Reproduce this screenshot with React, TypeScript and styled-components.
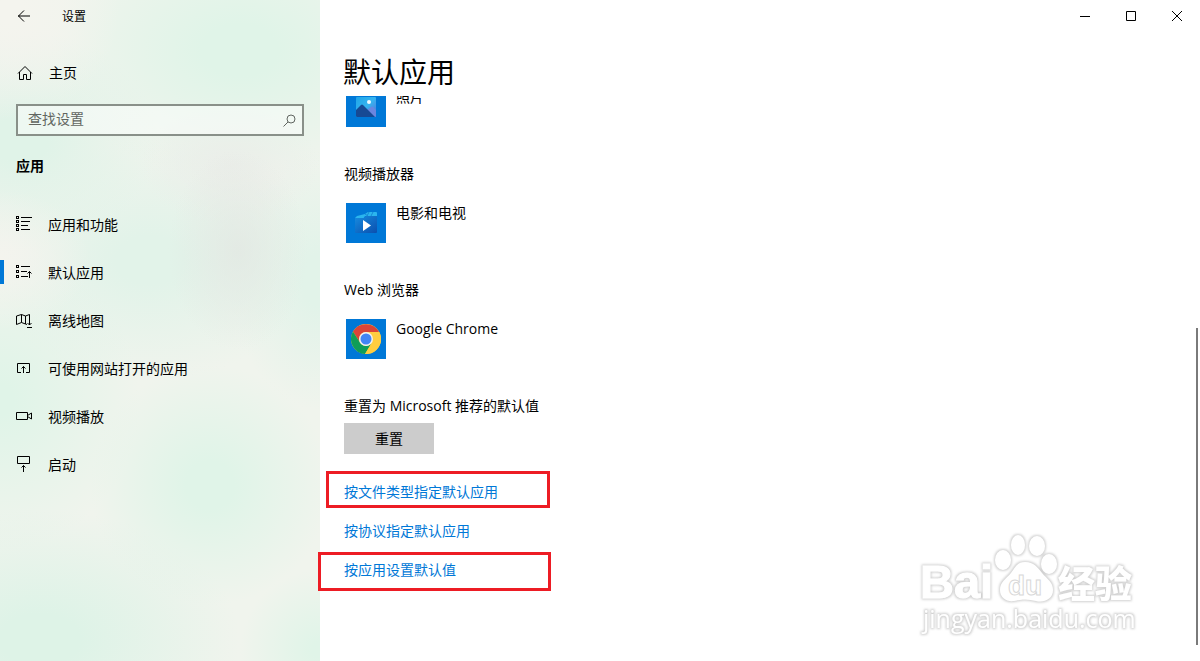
import React from "react";
import styled, { createGlobalStyle } from "styled-components";

const GlobalStyle = createGlobalStyle`
  *, *::before, *::after { box-sizing: border-box; }
  body {
    margin: 0;
    background: #fff;
    color: #000;
    font-family: "Open Sans", "Noto Sans CJK SC", sans-serif;
    font-size: 14px;
    line-height: 20px;
  }
  button, input { font: inherit; color: inherit; }
`;

const Page = styled.div`
  display: flex;
  min-height: 100vh;
  overflow: hidden;
`;

/* Sidebar */

const Sidebar = styled.aside`
  flex: 0 0 320px;
  background:
    radial-gradient(ellipse 70px 100px at 238px 250px, rgba(225, 230, 225, 0.7) 0%, rgba(225, 230, 225, 0) 100%),
    radial-gradient(ellipse 90px 60px at 230px 165px, rgba(234, 236, 232, 0.8) 0%, rgba(234, 236, 232, 0) 100%),
    radial-gradient(ellipse 110px 110px at 10px 10px, rgba(244, 244, 238, 1) 10%, rgba(244, 244, 238, 0) 100%),
    radial-gradient(ellipse 90px 70px at 0 260px, rgba(244, 244, 238, 1) 0%, rgba(244, 244, 238, 0) 100%),
    radial-gradient(ellipse 190px 130px at 240px 50px, rgba(224, 244, 232, 1) 20%, rgba(224, 244, 232, 0) 100%),
    radial-gradient(ellipse 140px 110px at 20px 140px, rgba(224, 243, 232, 1) 20%, rgba(224, 243, 232, 0) 100%),
    radial-gradient(ellipse 120px 120px at 210px 485px, rgba(224, 244, 232, 1) 20%, rgba(224, 244, 232, 0) 100%),
    radial-gradient(ellipse 200px 130px at 40px 640px, rgba(222, 243, 231, 1) 20%, rgba(222, 243, 231, 0) 100%),
    radial-gradient(ellipse 140px 150px at 0 400px, rgba(224, 244, 232, 1) 10%, rgba(224, 244, 232, 0) 100%),
    radial-gradient(ellipse 170px 120px at 150px 260px, rgba(226, 243, 233, 1) 20%, rgba(226, 243, 233, 0) 100%),
    radial-gradient(ellipse 90px 130px at 320px 280px, rgba(226, 243, 233, 1) 20%, rgba(226, 243, 233, 0) 100%),
    radial-gradient(ellipse 80px 80px at 320px 650px, rgba(224, 244, 232, 1) 10%, rgba(224, 244, 232, 0) 100%),
    #f0f4ed;
`;

const TitleRow = styled.div`
  display: flex;
  align-items: center;
  height: 32px;
  font-size: 12px;
`;

const BackButton = styled.button`
  display: grid;
  place-items: center;
  width: 48px;
  height: 32px;
  padding: 0;
  border: 0;
  background: transparent;
`;

const WindowTitle = styled.span`
  margin-left: 14px;
  padding-top: 2px;
`;

const HomeLink = styled.a`
  display: flex;
  align-items: center;
  gap: 16px;
  height: 48px;
  margin-top: 17px;
  padding-left: 17px;
  color: inherit;
  text-decoration: none;
`;

const SearchBox = styled.label`
  display: flex;
  align-items: center;
  height: 32px;
  margin: 7px 16px 0;
  padding: 0 6px 0 10px;
  border: 2px solid #899089;
  background: rgba(255, 255, 255, 0.45);
`;

const SearchInput = styled.input`
  flex: 1;
  min-width: 0;
  height: 28px;
  padding: 0 0 4px;
  border: 0;
  outline: 0;
  background: transparent;
  &::placeholder { color: #616661; opacity: 1; }
`;

const SidebarHeading = styled.h2`
  margin: 20px 16px 24px;
  font-size: 14px;
  line-height: 20px;
  font-weight: 700;
`;

const NavItem = styled.a<{ $active?: boolean }>`
  display: flex;
  align-items: center;
  gap: 14px;
  height: 48px;
  padding-left: 12px;
  color: inherit;
  text-decoration: none;
  &::before {
    content: "";
    width: 4px;
    height: 24px;
    margin: 0 -2px 0 -12px;
    background: ${(p) => (p.$active ? "#0078d7" : "transparent")};
  }
`;

const NavLabel = styled.span`
  padding-top: 2px;
`;

const Icon = styled.svg`
  display: block;
  flex: none;
  fill: none;
  stroke: currentColor;
  stroke-width: 1;
`;

/* Main pane */

const Main = styled.main`
  position: relative;
  flex: 1;
  min-width: 0;
`;

const Header = styled.header`
  padding-bottom: 4px;
`;

const CaptionButtons = styled.div`
  display: flex;
  justify-content: flex-end;
`;

const CaptionButton = styled.button`
  display: grid;
  place-items: center;
  width: 46px;
  height: 32px;
  padding: 0;
  border: 0;
  background: transparent;
`;

const PageTitle = styled.h1`
  margin: 20px 23px 0;
  font-size: 28px;
  line-height: 40px;
  font-weight: 400;
`;

/* Clips the scrolled list at its top edge; highlights may reach over the sides. */
const ScrollArea = styled.div`
  display: flow-root;
  overflow-x: visible;
  overflow-y: clip;
`;

const Content = styled.div`
  margin-top: -9px;
  padding: 0 24px 24px;
`;

const Group = styled.section`
  margin-bottom: 37px;
`;

const GroupTitle = styled.h3`
  margin: 0 0 19px;
  font-size: 14px;
  line-height: 20px;
  font-weight: 400;
`;

const AppButton = styled.button`
  display: flex;
  gap: 10px;
  padding: 0 2px;
  border: 0;
  background: transparent;
  text-align: left;
`;

const Tile = styled.span`
  display: grid;
  place-items: center;
  width: 40px;
  height: 40px;
  background: #0078d7;
`;

const ResetTitle = styled(GroupTitle)`
  margin-bottom: 7px;
`;

const ResetButton = styled.button`
  display: block;
  width: 90px;
  height: 31px;
  padding: 0;
  border: 0;
  background: #ccc;
`;

const Links = styled.ul`
  display: grid;
  gap: 19px;
  margin: 28px 0 0;
  padding: 0;
  list-style: none;
`;

const LinkRow = styled.li`
  position: relative;
  height: 20px;
`;

const TextLink = styled.a`
  color: #0078d7;
  text-decoration: none;
`;

const Highlight = styled.span<{ $left: number; $top: number; $width: number; $height: number }>`
  position: absolute;
  left: ${(p) => p.$left}px;
  top: ${(p) => p.$top}px;
  width: ${(p) => p.$width}px;
  height: ${(p) => p.$height}px;
  border: 3px solid #ed1c24;
  pointer-events: none;
`;

const ScrollThumb = styled.div`
  position: absolute;
  right: 2px;
  bottom: 16px;
  width: 2px;
  height: 48%;
  background: #7a7a7a;
`;

const Watermark = styled.svg`
  position: absolute;
  right: 58px;
  bottom: 21px;
  pointer-events: none;
`;

/* Icons */

const AppsIcon = () => (
  <Icon width="18" height="16" shapeRendering="crispEdges">
    {[0, 4, 8, 12].map((y) => <rect key={y} x="0.5" y={y + 0.5} width="2" height="2" />)}
    <path d="M5 1.5h11M5 5.5h9M5 9.5h7M5 13.5h9" />
  </Icon>
);

const DefaultsIcon = () => (
  <Icon width="18" height="16">
    {[1, 6, 11].map((y) => <rect key={y} x="0.5" y={y + 0.5} width="2" height="2" />)}
    <path d="M5 2.5h9M5 7.5h6M5 12.5h7M13.5 14V7.5M11.5 9.5l2-2l2 2" />
  </Icon>
);

const MapIcon = () => (
  <Icon width="18" height="16">
    <path d="M11 12.5l-1.500-.5l-4-1.500l-5 2V4l5-1.500l4 1.500l4-1.500V13M5.500 2.500v8M9.500 4v8M11.500 11l2 2l2-2M11 15.500h5" />
  </Icon>
);

const WebAppsIcon = () => (
  <Icon width="18" height="16">
    <path d="M5 12.500H1.500v-9h12v9H10M7.500 13V6.500M5.500 8.500l2-2l2 2" />
  </Icon>
);

const VideoIcon = () => (
  <Icon width="18" height="16">
    <path d="M.5 4.500h11v7H.5zM11.500 7.500l4-2.500v6l-4-2.500" />
  </Icon>
);

const StartupIcon = () => (
  <Icon width="18" height="16">
    <path d="M1.500 .5h12v7h-12zM7.500 16V9.500M5.500 11.500l2-2l2 2" />
  </Icon>
);

const PhotosLogo = () => (
  <svg width="20" height="20" viewBox="0 0 20 20">
    <defs>
      <linearGradient id="sky" x1="0" y1="0" x2="1" y2="1">
        <stop offset="0" stopColor="#1fa5e8" />
        <stop offset="0.5" stopColor="#35b4f0" />
        <stop offset="1" stopColor="#5c6bd6" />
      </linearGradient>
    </defs>
    <rect width="20" height="20" rx="1" fill="url(#sky)" />
    <path d="M10 14l5-4q1-1 2 0l3 3v6q0 1-1 1h-5z" fill="#6a86e0" />
    <path d="M0 13l5-5q1-1 2 0l12 12H1q-1 0-1-1z" fill="#174a94" />
    <circle cx="13" cy="5" r="2" fill="#effaff" />
  </svg>
);

const MoviesLogo = () => (
  <svg width="24" height="22" viewBox="0 0 24 22">
    <defs>
      <linearGradient id="film" x1="0" y1="0" x2="1" y2="1">
        <stop offset="0" stopColor="#168be0" />
        <stop offset="1" stopColor="#0b4fae" />
      </linearGradient>
    </defs>
    <path d="M1 6l2-2l8-2l3-2h8q1 0 1 1v3H11l-2 3H1z" fill="#2bb5ee" />
    <path d="M11 2l3 2M15 0l-2 4M19 0l-2 4" stroke="#1689d5" />
    <path d="M1 6h9l2-2h11v16q0 1-1 1H2q-1 0-1-1z" fill="url(#film)" />
    <path d="M9 8l8 5.500l-8 5.500z" fill="#fff" />
  </svg>
);

const ChromeLogo = () => (
  <svg width="30" height="30" viewBox="0 0 30 30">
    <circle cx="15" cy="15" r="15" fill="#ffcd40" />
    <path d="M2 7.500A15 15 0 0 1 28 8H15a7 7 0 0 0-6 10.500z" fill="#db4437" />
    <path d="M2 7.500A15 15 0 0 0 14 30l7-11.500a7 7 0 0 1-12 0z" fill="#0f9d58" />
    <path d="M15 8h13.300A15 15 0 0 1 14 30l7-11.500a7 7 0 0 0-6-10.500z" fill="#ffcd40" />
    <circle cx="15" cy="15" r="7" fill="#f1f1f1" />
    <circle cx="15" cy="15" r="5.500" fill="#4285f4" />
  </svg>
);

const BaiduWatermark = () => (
  <Watermark width="224" height="112" viewBox="0 0 224 112" aria-label="Baidu 经验">
    <defs>
      <filter id="glow" x="-5%" y="-5%" width="110%" height="110%">
        <feMorphology in="SourceAlpha" operator="dilate" radius="1" result="fat" />
        <feGaussianBlur in="fat" stdDeviation="0.8" result="soft" />
        <feFlood floodColor="#c4c4c4" floodOpacity="0.8" />
        <feComposite in2="soft" operator="in" result="halo" />
        <feMerge>
          <feMergeNode in="halo" />
          <feMergeNode in="SourceGraphic" />
        </feMerge>
      </filter>
    </defs>
    <g fill="#fff" filter="url(#glow)">
      <text x="2" y="70" fontFamily="Liberation Sans" fontWeight="700" fontSize="47" stroke="#fff">Bai</text>
      <ellipse cx="85" cy="32" rx="8" ry="10" />
      <ellipse cx="100" cy="17" rx="7" ry="10" />
      <ellipse cx="119" cy="18" rx="8" ry="10" />
      <ellipse cx="131" cy="36" rx="8" ry="10" />
      <path d="M107 34c-8 0-10 6-14 11c-5 6-11 9-11 17c0 8 7 12 14 11c8-2 15-2 22 0c8 2 17-2 17-11c0-8-6-11-11-17c-5-6-8-11-17-11z" />
      <text x="140" y="70" fontFamily="Noto Sans CJK SC" fontWeight="900" fontSize="37">经验</text>
      <text x="5" y="100" fontFamily="Open Sans" fontSize="25">jingyan.baidu.com</text>
    </g>
    <text x="90" y="67" fontFamily="Liberation Sans" fontWeight="700" fontSize="28" fill="#fff" stroke="#d8d8d8">du</text>
  </Watermark>
);

const navItems = [
  { label: "应用和功能", icon: <AppsIcon /> },
  { label: "默认应用", icon: <DefaultsIcon />, active: true },
  { label: "离线地图", icon: <MapIcon /> },
  { label: "可使用网站打开的应用", icon: <WebAppsIcon /> },
  { label: "视频播放", icon: <VideoIcon /> },
  { label: "启动", icon: <StartupIcon /> },
];

const groups = [
  { title: "", app: "照片", logo: <PhotosLogo /> },
  { title: "视频播放器", app: "电影和电视", logo: <MoviesLogo /> },
  { title: "Web 浏览器", app: "Google Chrome", logo: <ChromeLogo /> },
];

export default function App() {
  return (
    <>
      <GlobalStyle />
      <Page>
        <Sidebar>
          <TitleRow>
            <BackButton aria-label="返回">
              <Icon width="12" height="12"><path d="M0 6h12M6 .5L.5 6L6 11.500" /></Icon>
            </BackButton>
            <WindowTitle>设置</WindowTitle>
          </TitleRow>
          <HomeLink href="#home">
            <Icon width="16" height="16">
              <path d="M1 8.500L8 1.500l7 7M2.500 7v7.500h4v-5h3v5h4V7" />
            </Icon>
            主页
          </HomeLink>
          <SearchBox>
            <SearchInput type="text" placeholder="查找设置" aria-label="查找设置" />
            <Icon width="13" height="13" color="#616661">
              <circle cx="8" cy="5" r="4" /><path d="M5 8L.5 12.500" />
            </Icon>
          </SearchBox>
          <SidebarHeading>应用</SidebarHeading>
          <nav>
            {navItems.map((item) => (
              <NavItem key={item.label} href="#nav" $active={item.active}>
                {item.icon}
                <NavLabel>{item.label}</NavLabel>
              </NavItem>
            ))}
          </nav>
        </Sidebar>
        <Main>
          <Header>
            <CaptionButtons>
              <CaptionButton aria-label="最小化">
                <Icon width="10" height="10"><path d="M0 5.500h10" /></Icon>
              </CaptionButton>
              <CaptionButton aria-label="最大化">
                <Icon width="10" height="10"><path d="M.5 .5h9v9h-9z" /></Icon>
              </CaptionButton>
              <CaptionButton aria-label="关闭">
                <Icon width="10" height="10"><path d="M0 0l10 10M10 0L0 10" /></Icon>
              </CaptionButton>
            </CaptionButtons>
            <PageTitle>默认应用</PageTitle>
          </Header>
          <ScrollArea>
            <Content>
              {groups.map((group) => (
                <Group key={group.app}>
                  {group.title && <GroupTitle>{group.title}</GroupTitle>}
                  <AppButton>
                    <Tile>{group.logo}</Tile>
                    {group.app}
                  </AppButton>
                </Group>
              ))}
              <ResetTitle>重置为 Microsoft 推荐的默认值</ResetTitle>
              <ResetButton>重置</ResetButton>
              <Links>
                <LinkRow>
                  <TextLink href="#file-type">按文件类型指定默认应用</TextLink>
                  <Highlight $left={-18} $top={-11} $width={224} $height={37} />
                </LinkRow>
                <LinkRow>
                  <TextLink href="#protocol">按协议指定默认应用</TextLink>
                </LinkRow>
                <LinkRow>
                  <TextLink href="#by-app">按应用设置默认值</TextLink>
                  <Highlight $left={-26} $top={-8} $width={233} $height={39} />
                </LinkRow>
              </Links>
            </Content>
          </ScrollArea>
          <ScrollThumb />
          <BaiduWatermark />
        </Main>
      </Page>
    </>
  );
}
